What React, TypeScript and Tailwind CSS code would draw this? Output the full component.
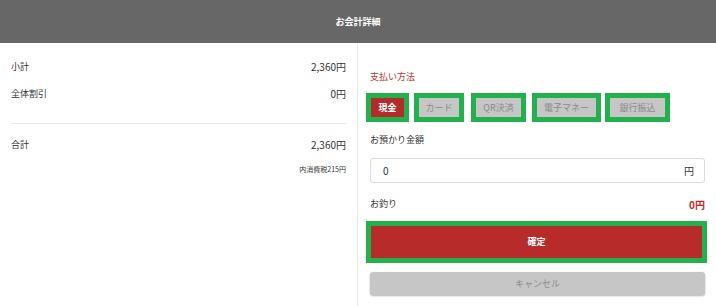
import * as React from "react";

const methods = [
	{ label: "現金", outer: "w-[43px]", gap: "" },
	{ label: "カード", outer: "w-[50px]", gap: "ml-[5px]" },
	{ label: "QR決済", outer: "w-[55px]", gap: "ml-[7px]" },
	{ label: "電子マネー", outer: "w-[69px]", gap: "ml-[6px]" },
	{ label: "銀行振込", outer: "w-[65px]", gap: "ml-[4px]" },
];

export default function App() {
	const [method, setMethod] = React.useState("現金");
	const [amount, setAmount] = React.useState("0");

	return (
		<div
			className="w-[716px] h-[306px] overflow-hidden bg-white text-[#333]"
			style={{ fontFamily: '"Noto Sans CJK JP", "Noto Sans", sans-serif' }}
		>
			<div className="h-[43px] bg-[#676767] flex items-center justify-center">
				<span className="text-[9px] font-bold text-white">お会計詳細</span>
			</div>
			<div className="flex h-[263px]">
				{/* left: totals */}
				<div className="w-[358px] border-r border-[#e6e6e6] px-[11px] pt-[10px]">
					<div className="h-[27px] flex items-center justify-between">
						<span className="text-[9px]">小計</span>
						<span className="text-[10px]">2,360円</span>
					</div>
					<div className="h-[27px] flex items-center justify-between">
						<span className="text-[9px]">全体割引</span>
						<span className="text-[10px]">0円</span>
					</div>
					<div className="mt-[16px] border-t border-[#e8e8e8]" />
					<div className="mt-[7px] h-[27px] flex items-center justify-between">
						<span className="text-[9px]">合計</span>
						<span className="text-[10px]">2,360円</span>
					</div>
					<div className="mt-[6px] h-[10px] flex items-center justify-end">
						<span className="text-[7px] leading-[10px]">内消費税215円</span>
					</div>
				</div>

				{/* right: payment */}
				<div className="flex-1 pl-[12px] pr-[11px] pt-[27px]">
					<div className="text-[9px] leading-[14px] text-[#c0392b]">支払い方法</div>
					<div className="mt-[9px] ml-[-4px] flex">
						{methods.map((m) => (
							<div
								key={m.label}
								className={`${m.outer} ${m.gap} h-[29px] p-[5px] bg-[#22b14c]`}
							>
								<button
									onClick={() => setMethod(m.label)}
									className={
										method === m.label
											? "w-full h-full flex items-center justify-center bg-[#b52a2a] text-white font-bold text-[9px]"
											: "w-full h-full flex items-center justify-center bg-[#c6c6c6] text-[#8a8a8a] text-[9px]"
									}
								>
									{m.label}
								</button>
							</div>
						))}
					</div>

					<div className="mt-[11px] text-[9px] leading-[14px]">お預かり金額</div>
					<div className="mt-[11px] h-[25px] flex items-center border border-[#dcdcdc] rounded-[3px] pl-[12px] pr-[10px]">
						<input
							className="flex-1 min-w-0 text-[10px] outline-none bg-transparent"
							value={amount}
							onChange={(e) => setAmount(e.target.value)}
						/>
						<span className="text-[10px]">円</span>
					</div>

					<div className="mt-[14px] h-[14px] flex items-center justify-between">
						<span className="text-[9px]">お釣り</span>
						<span className="text-[10px] font-bold text-[#c62828]">0円</span>
					</div>

					<div className="mt-[10px] ml-[-4px] mr-[-2px] h-[42px] p-[5px] bg-[#22b14c]">
						<button className="w-full h-full bg-[#b82b2b] text-white font-bold text-[9px]">
							確定
						</button>
					</div>
					<button className="mt-[9px] w-full h-[23px] rounded-[3px] bg-[#c6c6c6] text-[#8a8a8a] text-[9px] shadow-[0_1px_2px_rgba(0,0,0,0.3)]">
						キャンセル
					</button>
				</div>
			</div>
		</div>
	);
}
